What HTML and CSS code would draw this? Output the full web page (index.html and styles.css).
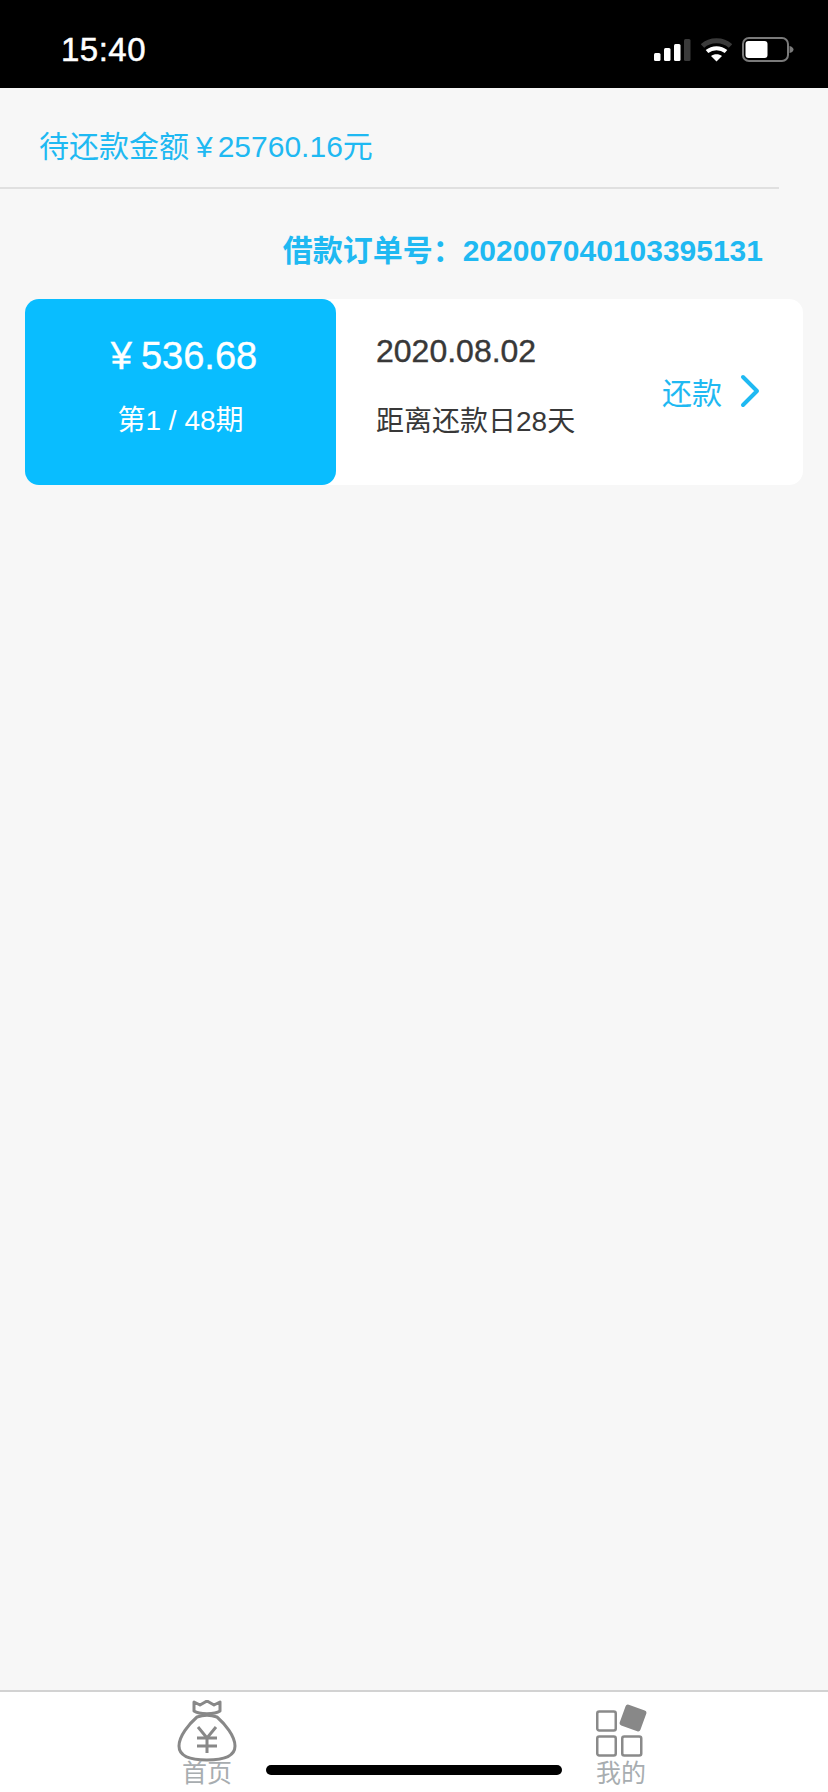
FILE: index.html
```html
<!DOCTYPE html>
<html>
  <head>
    <meta charset="utf-8">
    <link rel="stylesheet" href="styles.css">
  </head>
  <body>
    <header class="status">
      <span class="time">15:40</span>
      <div class="status-icons">
        <svg width="37" height="24" viewBox="0 0 37 24">
          <rect x="0" y="15" width="6.500" height="8" rx="1.500" fill="#fff"/>
          <rect x="10" y="10" width="6.500" height="13" rx="1.500" fill="#fff"/>
          <rect x="20" y="6" width="6.500" height="17" rx="1.500" fill="#fff"/>
          <rect x="30" y="1" width="6.500" height="22" rx="1.500" fill="#3a3a3a"/>
        </svg>
        <svg width="31" height="24" viewBox="0 0 31 24">
          <path d="M1.500 8C9 1 22 1 29.500 8" fill="none" stroke="#3a3a3a" stroke-width="5"/>
          <path d="M6 13.500C11.500 9 19.500 9 25 13.500" fill="none" stroke="#fff" stroke-width="4"/>
          <path d="M15.500 23.500L10 18C13 15.500 18 15.500 21 18Z" fill="#fff"/>
        </svg>
        <svg width="52" height="26" viewBox="0 0 52 26">
          <rect x="1" y="1" width="45" height="23" rx="6" fill="none" stroke="#7a7a7a" stroke-width="2"/>
          <rect x="3.500" y="4" width="22" height="17" rx="3" fill="#fff"/>
          <path d="M47.500 9C50 9.500 51.500 11 51.500 12.500C51.500 14 50 15.500 47.500 16Z" fill="#7a7a7a"/>
        </svg>
      </div>
    </header>

    <main class="content">
      <div class="due">待还款金额<span class="due-yen">¥</span>25760.16元</div>
      <div class="order">借款订单号：202007040103395131</div>

      <section class="bill">
        <div class="bill-amount">
          <div class="amount"><span class="amount-yen">¥</span>536.68</div>
          <div class="period">第1 / 48期</div>
        </div>
        <div class="bill-date">
          <div class="date">2020.08.02</div>
          <div class="days">距离还款日28天</div>
        </div>
        <a class="repay">
          <span>还款</span>
          <svg width="20" height="36" viewBox="0 0 20 36">
            <path d="M3 4L17 18L3 32" fill="none" stroke="#1fb9f2" stroke-width="4" stroke-linecap="round" stroke-linejoin="round"/>
          </svg>
        </a>
      </section>
    </main>

    <nav class="tabs">
      <a class="tab">
        <svg width="60" height="62" viewBox="0 0 60 62">
          <path d="M17 2L23 5L30 1L37 5L43 2V11C38 14.500 22 14.500 17 11Z" fill="none" stroke="#888" stroke-width="3" stroke-linejoin="round"/>
          <path d="M20 17C12 24 2 36 2 46C2 57 14 60 30 60C46 60 58 57 58 46C58 36 48 24 40 17C34 15 26 15 20 17Z" fill="none" stroke="#888" stroke-width="3"/>
          <path d="M21 27L30 38L39 27M20 38H40M20 46H40M30 38V53" fill="none" stroke="#888" stroke-width="3"/>
        </svg>
        <span>首页</span>
      </a>
      <a class="tab">
        <svg width="52" height="62" viewBox="0 0 52 62">
          <rect x="2.250" y="11.500" width="18.500" height="19" rx="2" fill="none" stroke="#8a8a8a" stroke-width="2.500"/>
          <rect x="27" y="7" width="22" height="22" rx="2.500" fill="#888" transform="rotate(20 38 18)"/>
          <rect x="2.250" y="36.500" width="18.500" height="19" rx="2" fill="none" stroke="#8a8a8a" stroke-width="2.500"/>
          <rect x="27.250" y="36.500" width="19" height="19" rx="2" fill="none" stroke="#8a8a8a" stroke-width="2.500"/>
        </svg>
        <span>我的</span>
      </a>
    </nav>
    <div class="home-bar"></div>
  </body>
</html>
```

FILE: styles.css
```css
* {
  box-sizing: border-box;
}
html, body {
  height: 100%;
}
body {
  margin: 0;
  display: flex;
  flex-direction: column;
  background: #f7f7f7;
  font-family: "Liberation Sans", "Noto Sans CJK SC", sans-serif;
}

/* status bar */
.status {
  height: 88px;
  padding: 11px 34px 0 61px;
  background: #000;
  color: #fff;
  display: flex;
  align-items: center;
  justify-content: space-between;
}
.time {
  font-size: 33px;
  letter-spacing: 0.5px;
  -webkit-text-stroke: 0.5px #fff;
}
.status-icons {
  display: flex;
  align-items: center;
  gap: 10px;
}

/* main */
.content {
  flex: 1;
}
.due {
  width: 779px;
  height: 101px;
  padding: 40px 0 0 39px;
  font-size: 30px;
  line-height: 38px;
  color: #1fb9f2;
  border-bottom: 2px solid #e0e0e0;
}
.due-yen {
  margin: 0 5px 0 7px;
}
.order {
  margin-top: 44px;
  padding-right: 65px;
  text-align: right;
  font-size: 30px;
  line-height: 36px;
  font-weight: bold;
  color: #1fb9f2;
}
.bill {
  margin: 30px 25px 0;
  height: 186px;
  background: #fff;
  border-radius: 14px;
  display: flex;
  align-items: center;
}
.bill-amount {
  width: 311px;
  height: 100%;
  padding-top: 34px;
  background: #09bdff;
  border-radius: 14px;
  color: #fff;
  text-align: center;
}
.amount {
  padding-left: 7px;
  font-size: 38px;
  line-height: 46px;
  -webkit-text-stroke: 0.4px #fff;
}
.amount-yen {
  margin-right: 9px;
}
.period {
  margin-top: 24px;
  font-size: 28px;
  line-height: 36px;
}
.bill-date {
  flex: 1;
  align-self: stretch;
  padding: 33px 0 0 40px;
  color: #383838;
}
.date {
  font-size: 32px;
  line-height: 38px;
  -webkit-text-stroke: 0.4px #383838;
}
.days {
  margin-top: 34px;
  font-size: 28px;
  line-height: 36px;
}
.repay {
  display: flex;
  align-items: center;
  gap: 18px;
  padding: 0 43px 3px 0;
  font-size: 30px;
  color: #1fb9f2;
}

/* tab bar */
.tabs {
  height: 102px;
  padding-top: 8px;
  background: #fff;
  border-top: 2px solid #d2d2d2;
  display: grid;
  grid-template-columns: 1fr 1fr;
}
.tab {
  display: flex;
  flex-direction: column;
  align-items: center;
  font-size: 25px;
  line-height: 30px;
  color: #a8adb0;
}
.tab span {
  margin-top: -4px;
}
.home-bar {
  position: absolute;
  left: 266px;
  bottom: 17px;
  width: 296px;
  height: 10px;
  border-radius: 5px;
  background: #000;
}
```
